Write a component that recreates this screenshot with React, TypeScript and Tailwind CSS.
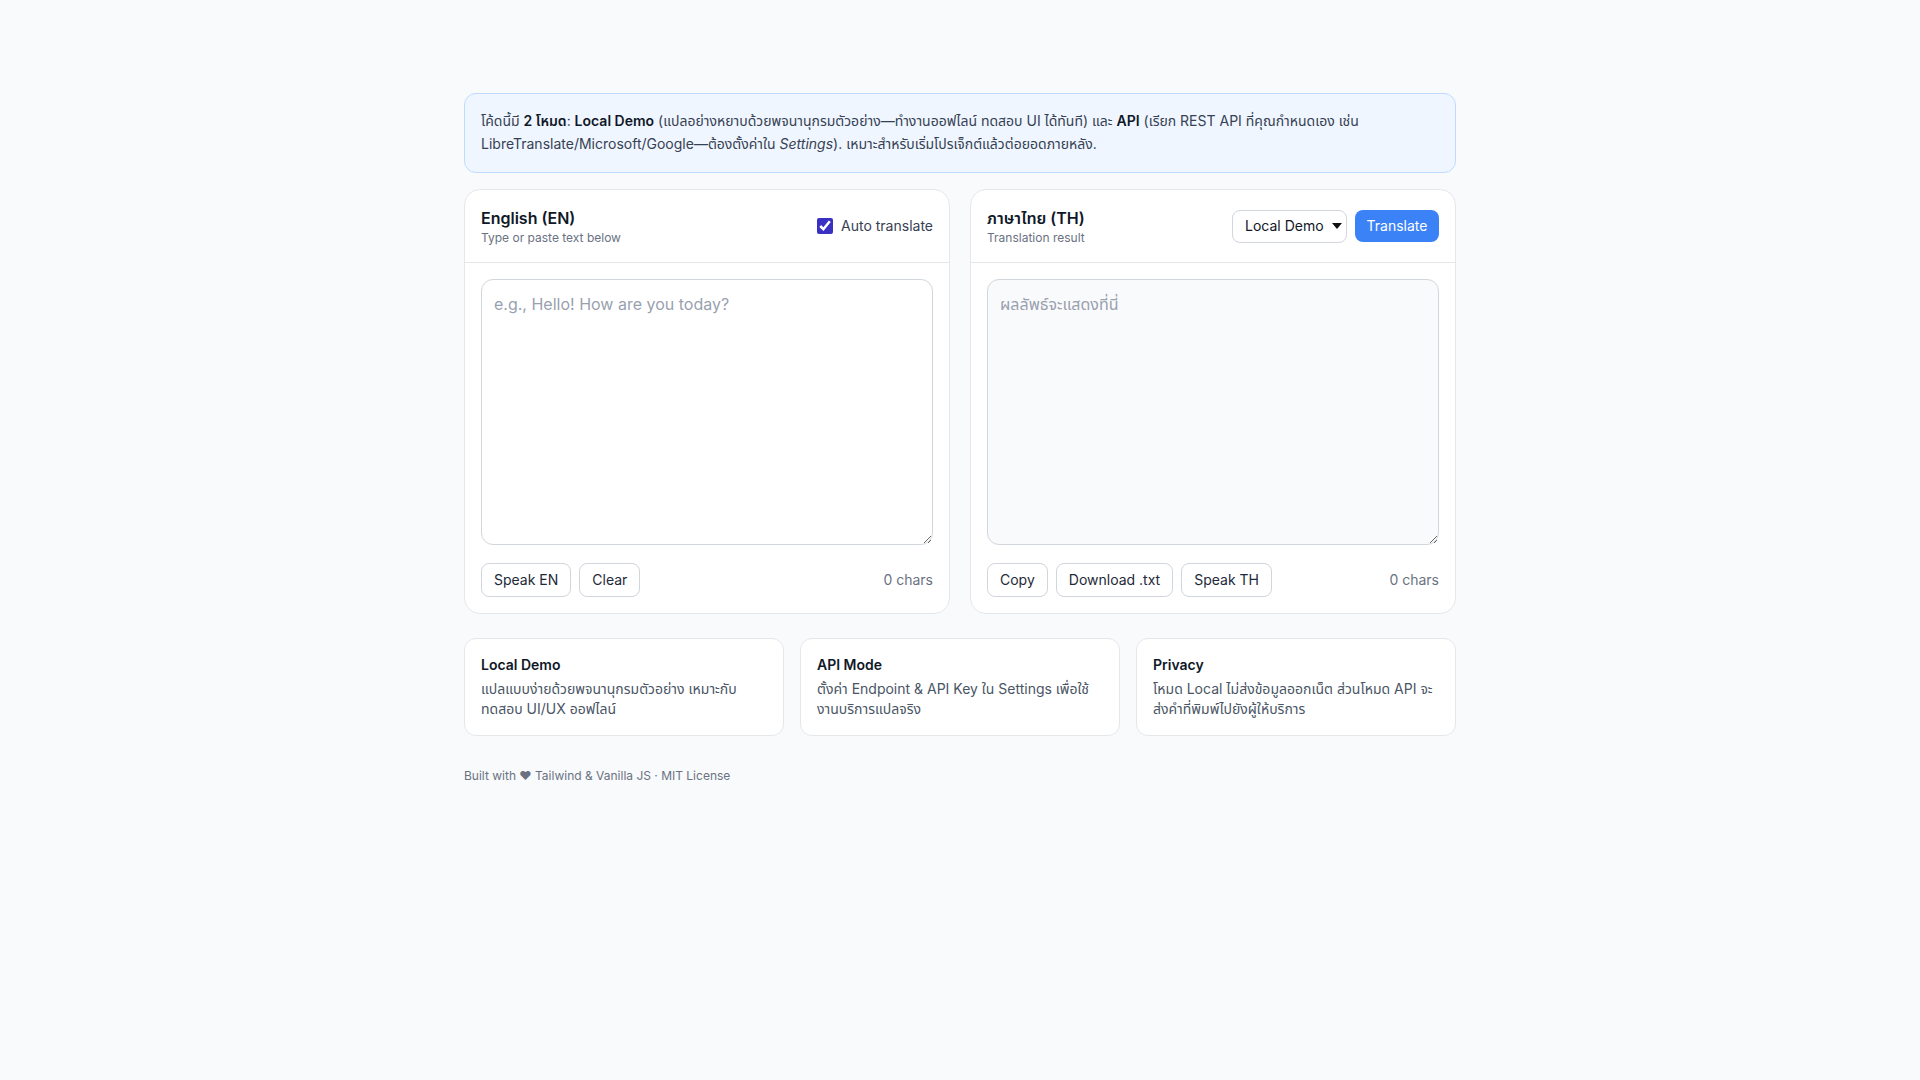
import React from "react";

const font = { fontFamily: "Inter, 'Noto Sans', 'Noto Sans Thai', sans-serif" };

function Btn({ children }: { children: React.ReactNode }) {
  return (
    <button className="h-[34px] px-3 rounded-lg border border-gray-300 bg-white text-sm text-gray-800 leading-5">
      {children}
    </button>
  );
}

function InfoCard({ title, children }: { title: string; children: React.ReactNode }) {
  return (
    <div className="rounded-xl border border-gray-200 bg-white p-4 h-[98px]">
      <div className="text-sm font-semibold text-gray-900 leading-5">{title}</div>
      <p className="mt-1 text-sm text-gray-600 leading-5">{children}</p>
    </div>
  );
}

export default function App() {
  return (
    <div className="min-h-[1080px] bg-[#f8fafc]" style={font}>
      <div className="mx-auto max-w-[1024px] px-4 pt-[93px]">
        <div className="rounded-xl border border-blue-200 bg-blue-50 px-4 pt-[15px] pb-[17px] text-sm leading-[23px] text-gray-700">
          โค้ดนี้มี <b className="font-semibold text-gray-900">2 โหมด</b>: <b className="font-semibold text-gray-900">Local Demo</b> (แปลอย่างหยาบด้วยพจนานุกรมตัวอย่าง—ทำงานออฟไลน์ ทดสอบ UI ได้ทันที) และ <b className="font-semibold text-gray-900">API</b> (เรียก REST API ที่คุณกำหนดเอง เช่น LibreTranslate/Microsoft/Google—ต้องตั้งค่าใน <i>Settings</i>). เหมาะสำหรับเริ่มโปรเจ็กต์แล้วต่อยอดภายหลัง.
        </div>

        <div className="mt-4 grid grid-cols-2 gap-5">
          {/* Left card */}
          <div className="rounded-2xl border border-gray-200 bg-white">
            <div className="flex h-[73px] items-center justify-between border-b border-gray-200 px-4">
              <div>
                <div className="text-base font-semibold leading-6 text-gray-900">English (EN)</div>
                <div className="text-xs leading-4 text-gray-500">Type or paste text below</div>
              </div>
              <label className="flex items-center gap-2 text-sm text-gray-700">
                <input type="checkbox" checked readOnly className="h-4 w-4 accent-[#3b30c4]" />
                Auto translate
              </label>
            </div>
            <div className="p-4">
              <textarea
                className="block h-[266px] w-full resize-y rounded-xl border border-gray-300 bg-white px-3 py-3 text-base leading-6 text-gray-900 placeholder:text-gray-400 outline-none"
                placeholder="e.g., Hello! How are you today?"
              />
              <div className="mt-[18px] flex items-center justify-between">
                <div className="flex gap-2">
                  <Btn>Speak EN</Btn>
                  <Btn>Clear</Btn>
                </div>
                <span className="text-sm text-gray-500">0 chars</span>
              </div>
            </div>
          </div>

          {/* Right card */}
          <div className="rounded-2xl border border-gray-200 bg-white">
            <div className="flex h-[73px] items-center justify-between border-b border-gray-200 px-4">
              <div>
                <div className="text-base font-semibold leading-6 text-gray-900">ภาษาไทย (TH)</div>
                <div className="text-xs leading-4 text-gray-500">Translation result</div>
              </div>
              <div className="flex items-center gap-2">
                <div className="flex h-[33px] w-[115px] items-center justify-between rounded-lg border border-gray-300 bg-white pl-[12px] pr-[4px] text-sm text-gray-900">
                  <span>Local Demo</span>
                  <svg width="10" height="6" viewBox="0 0 10 6"><path d="M0 0h10L5 6z" fill="#111" /></svg>
                </div>
                <button className="h-[32px] w-[84px] rounded-lg bg-[#3b82f6] text-sm text-white">Translate</button>
              </div>
            </div>
            <div className="p-4">
              <textarea
                readOnly
                className="block h-[266px] w-full resize-y rounded-xl border border-gray-300 bg-gray-50 px-3 py-3 text-base leading-6 text-gray-900 placeholder:text-gray-400 outline-none"
                placeholder="ผลลัพธ์จะแสดงที่นี่"
              />
              <div className="mt-[18px] flex items-center justify-between">
                <div className="flex gap-2">
                  <Btn>Copy</Btn>
                  <Btn>Download .txt</Btn>
                  <Btn>Speak TH</Btn>
                </div>
                <span className="text-sm text-gray-500">0 chars</span>
              </div>
            </div>
          </div>
        </div>

        <div className="mt-6 grid grid-cols-3 gap-4">
          <InfoCard title="Local Demo">แปลแบบง่ายด้วยพจนานุกรมตัวอย่าง เหมาะกับทดสอบ UI/UX ออฟไลน์</InfoCard>
          <InfoCard title="API Mode">ตั้งค่า Endpoint &amp; API Key ใน Settings เพื่อใช้งานบริการแปลจริง</InfoCard>
          <InfoCard title="Privacy">โหมด Local ไม่ส่งข้อมูลออกเน็ต ส่วนโหมด API จะส่งคำที่พิมพ์ไปยังผู้ให้บริการ</InfoCard>
        </div>

        <footer className="mt-8 text-xs leading-4 text-gray-500">
          Built with ❤ Tailwind &amp; Vanilla JS · MIT License
        </footer>
      </div>
    </div>
  );
}
